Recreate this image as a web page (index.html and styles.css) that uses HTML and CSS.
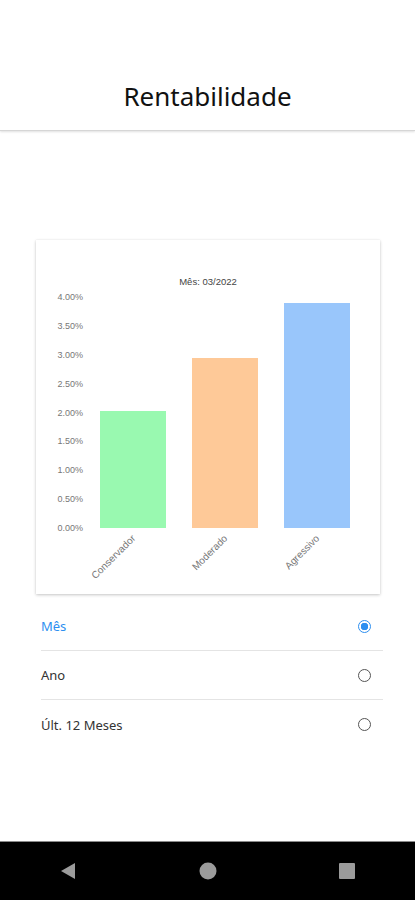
FILE: index.html
```html
<!DOCTYPE html>
<html>

<head>
    <meta charset="UTF-8">
    <meta name="viewport" content="width=device-width, initial-scale=1.0">
    <title>Rentabilidade</title>
    <link rel="stylesheet" href="styles.css">
</head>

<body>
    <div id="app">
        <header id="top">
            <h1>Rentabilidade</h1>
        </header>
        <main id="content">
            <div class="card">
                <svg class="chart" width="344" height="354" viewBox="0 0 344 354">
                    <text class="chart_title" x="172" y="45">Mês: 03/2022</text>
                    <g class="axis_y">
                        <text x="47" y="60">4.00%</text>
                        <text x="47" y="89">3.50%</text>
                        <text x="47" y="118">3.00%</text>
                        <text x="47" y="147">2.50%</text>
                        <text x="47" y="176">2.00%</text>
                        <text x="47" y="204">1.50%</text>
                        <text x="47" y="233">1.00%</text>
                        <text x="47" y="262">0.50%</text>
                        <text x="47" y="291">0.00%</text>
                    </g>
                    <rect x="64" y="171" width="66" height="117" fill="#99f9b0" />
                    <rect x="156" y="118" width="66" height="170" fill="#fec998" />
                    <rect x="248" y="63" width="66" height="225" fill="#99c6fb" />
                    <g class="axis_x">
                        <text transform="translate(100 299) rotate(-45)">Conservador</text>
                        <text transform="translate(192 299) rotate(-45)">Moderado</text>
                        <text transform="translate(284 299) rotate(-45)">Agressivo</text>
                    </g>
                </svg>
            </div>
            <ul id="period">
                <li class="active">Mês<span class="radio"></span></li>
                <li>Ano<span class="radio"></span></li>
                <li>Últ. 12 Meses<span class="radio"></span></li>
            </ul>
        </main>
        <nav id="navi">
            <svg width="16" height="18" viewBox="0 0 16 18"><path d="M15 1 L1 9 L15 17 Z" fill="#9b9b9b" /></svg>
            <svg width="18" height="18" viewBox="0 0 18 18"><circle cx="9" cy="9" r="8.5" fill="#9b9b9b" /></svg>
            <svg width="16" height="16" viewBox="0 0 16 16"><rect x="0" y="0" width="16" height="16" rx="1" fill="#9b9b9b" /></svg>
        </nav>
    </div>
</body>

</html>
```
FILE: styles.css
```css
* {
    margin: 0;
    padding: 0;
    border: none;
    box-sizing: border-box;
}

html,
body {
    width: 100%;
    height: 100%;
    background: white;
}

#app {
    display: flex;
    flex-direction: column;
    height: 900px;
    font-family: "Noto Sans", sans-serif;
}

#top {
    height: 131px;
    padding-top: 77px;
    text-align: center;
    border-bottom: 1px solid #d6d6d6;
    box-shadow: 0 1px 2px rgba(0, 0, 0, 0.12);
}

#top h1 {
    font-size: 26px;
    font-weight: normal;
    line-height: 38px;
    color: #111;
}

#content {
    flex: 1;
    padding-top: 109px;
}

.card {
    margin: 0 35px 0 36px;
    height: 354px;
    background: white;
    box-shadow: 0 1px 3px rgba(0, 0, 0, 0.22), 0 0 1px rgba(0, 0, 0, 0.08);
}

.chart {
    display: block;
    font-family: "Liberation Sans", Arial, sans-serif;
}

.chart_title {
    font-size: 9.5px;
    fill: #444;
    text-anchor: middle;
}

.axis_y text {
    font-size: 9px;
    fill: #777;
    text-anchor: end;
}

.axis_x text {
    font-size: 10px;
    fill: #777;
    text-anchor: end;
}

#period {
    list-style-type: none;
    margin: 8px 32px 0 41px;
}

#period li {
    display: flex;
    align-items: center;
    justify-content: space-between;
    height: 49px;
    padding-right: 12px;
    font-size: 13px;
    color: #333;
    border-bottom: 1px solid #e4e4e4;
}

#period li:last-child {
    border-bottom: none;
}

#period li.active {
    color: #2d8ff0;
}

.radio {
    width: 13px;
    height: 13px;
    border: 1.5px solid #555;
    border-radius: 50%;
}

li.active .radio {
    border-color: #2d8ff0;
    background: radial-gradient(circle, #2d8ff0 0 3.5px, white 4px);
}

#navi {
    height: 59px;
    background: black;
    border-top: 1px solid #8a8a8a;
    display: flex;
    align-items: center;
    justify-content: space-between;
    padding: 0 60px 0 60px;
}
```
